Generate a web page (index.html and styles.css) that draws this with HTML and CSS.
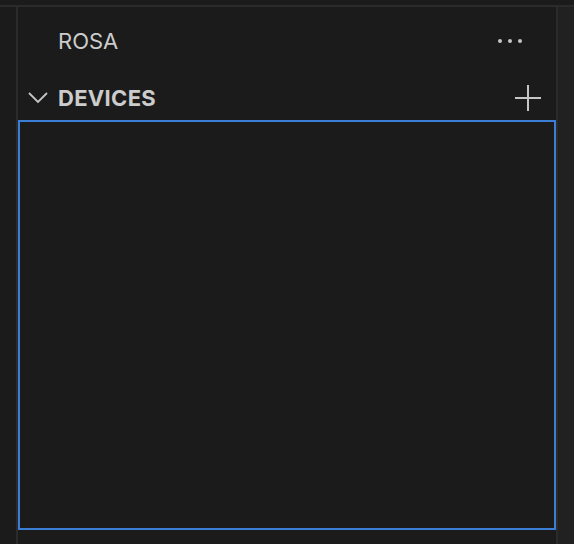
FILE: index.html
```html
<!DOCTYPE html>
<html lang="en">
	<head>
		<meta charset="UTF-8" />
		<title>ROSA</title>
		<link rel="stylesheet" href="styles.css">
	</head>
	<body>
		<div class="window">
			<div class="top-bar"></div>
			<div class="workbench">
				<div class="gutter"></div>
				<section class="side-pane">
					<header class="pane-title">
						<span class="pane-title__label">ROSA</span>
						<button class="icon-button icon-button_more" aria-label="More actions">
							<svg width="26" height="6" viewBox="0 0 26 6">
								<circle cx="3" cy="3" r="2" fill="#c5c5c5" />
								<circle cx="13" cy="3" r="2" fill="#c5c5c5" />
								<circle cx="23" cy="3" r="2" fill="#c5c5c5" />
							</svg>
						</button>
					</header>
					<div class="section-header">
						<svg class="section-header__chevron" width="20" height="12" viewBox="0 0 20 12">
							<path d="M1 1 L10 10 L19 1" fill="none" stroke="#c5c5c5" stroke-width="1.8" />
						</svg>
						<span class="section-header__label">DEVICES</span>
						<button class="icon-button icon-button_add" aria-label="Add device">
							<svg width="26" height="26" viewBox="0 0 26 26">
								<path d="M13 0 V26 M0 13 H26" stroke="#c5c5c5" stroke-width="2" />
							</svg>
						</button>
					</div>
					<div class="device-list"></div>
				</section>
				<div class="right-strip"></div>
			</div>
		</div>
	</body>
</html>
```
FILE: styles.css
```css
html {
	box-sizing: border-box;
}

*,
*::after,
*::before {
	box-sizing: inherit;
}

body {
	margin: 0;
	padding: 0;
	background-color: #1b1b1b;
	color: #cccccc;
	font-family: "Inter", "Liberation Sans", sans-serif;
	-webkit-font-smoothing: antialiased;
}

.window {
	display: flex;
	flex-direction: column;
	width: 574px;
	height: 544px;
	overflow: hidden;
}

.top-bar {
	height: 7px;
	flex-shrink: 0;
	border-bottom: 2px solid #2b2b2b;
}

.workbench {
	display: flex;
	flex: 1;
	min-height: 0;
}

.gutter {
	width: 16px;
	flex-shrink: 0;
}

.side-pane {
	display: flex;
	flex-direction: column;
	width: 542px;
	flex-shrink: 0;
	border-left: 2px solid #2b2b2b;
	border-right: 2px solid #2b2b2b;
}

.right-strip {
	flex: 1;
	background-color: #212121;
}

.pane-title {
	display: flex;
	align-items: center;
	height: 68px;
	padding: 0 33px 0 40px;
}

.pane-title__label {
	flex: 1;
	font-size: 22px;
	font-weight: 400;
}

.section-header {
	display: flex;
	align-items: center;
	height: 45px;
	padding: 0 15px 0 10px;
}

.section-header__chevron {
	display: block;
	margin-right: 10px;
}

.section-header__label {
	flex: 1;
	font-size: 22px;
	font-weight: 700;
	letter-spacing: 0.3px;
}

.icon-button {
	display: flex;
	align-items: center;
	justify-content: center;
	padding: 0;
	border: 0;
	background: none;
}

.icon-button svg {
	display: block;
}

.device-list {
	height: 410px;
	border: 2px solid #3a7fd5;
}
```
